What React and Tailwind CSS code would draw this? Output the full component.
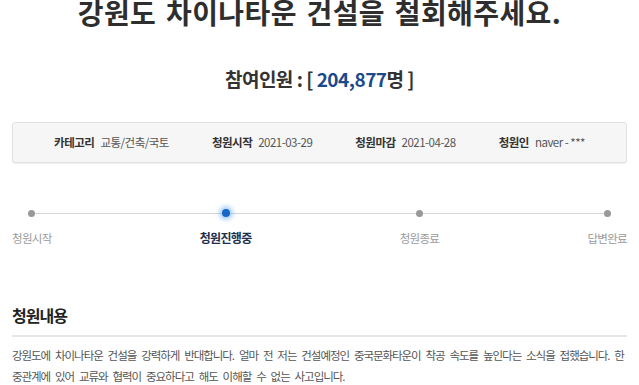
const steps = [
  { label: '청원시작', active: false },
  { label: '청원진행중', active: true },
  { label: '청원종료', active: false },
  { label: '답변완료', active: false },
];

const info = [
  { k: '카테고리', v: '교통/건축/국토' },
  { k: '청원시작', v: '2021-03-29' },
  { k: '청원마감', v: '2021-04-28' },
  { k: '청원인', v: 'naver - ***' },
];

function App() {
  return (
    <div className="w-[639px] h-[385px] overflow-hidden bg-white px-3 font-['Noto_Sans_CJK_KR',sans-serif] text-[#333]">
      {/* 제목 */}
      <h1 className="mt-[-6px] text-center text-[28px] leading-[36px] font-bold tracking-[0.4px] [word-spacing:3px] text-[#2e2e2e]">
        강원도 차이나타운 건설을 철회해주세요.
      </h1>

      <div className="mt-[36px] text-center text-[19px] leading-[26px] font-bold tracking-[-0.5px] text-[#333]">
        참여인원 : [ <span className="text-[#1b4a8c]">204,877</span>명 ]
      </div>

      {/* 정보 박스 */}
      <div className="mt-[30px] h-[41px] flex items-center justify-center gap-[43px] rounded-[3px] border border-[#e2e2e2] bg-[#f6f6f6] shadow-[0_1px_1px_rgba(0,0,0,0.06)] text-[11.5px] tracking-[-0.5px]">
        {info.map((it) => (
          <div key={it.k} className="flex items-center gap-[6px]">
            <span className="font-bold text-[#333]">{it.k}</span>
            <span className="text-[#555]">{it.v}</span>
          </div>
        ))}
      </div>

      {/* 진행 단계 */}
      <div className="relative mt-[43px] flex justify-between">
        <div className="absolute left-[21px] right-[21px] top-[7px] h-px bg-[#d6d6d6]" />
        {steps.map((s) => (
          <div key={s.label} className="relative flex flex-col items-center">
            <div className="h-[14px] flex items-center justify-center">
              {s.active ? (
                <span className="block w-[8px] h-[8px] rounded-full bg-[#1565c8] shadow-[0_0_4px_3px_rgba(70,150,240,0.45)]" />
              ) : (
                <span className="block w-[7px] h-[7px] rounded-full bg-[#999]" />
              )}
            </div>
            <span
              className={
                s.active
                  ? 'mt-[10px] text-[12px] leading-[16px] font-bold tracking-[-0.7px] text-[#1e2f4d]'
                  : 'mt-[10px] text-[11.5px] leading-[16px] tracking-[-0.7px] text-[#9a9a9a]'
              }
            >
              {s.label}
            </span>
          </div>
        ))}
      </div>

      {/* 청원내용 */}
      <h2 className="mt-[59px] text-[16px] leading-[20px] font-bold tracking-[-1px] text-[#222]">청원내용</h2>
      <div className="mt-[10px] h-[2px] bg-[#e6e6e6]" />
      <p className="mt-[8px] text-[11.5px] leading-[21px] tracking-[-1.05px] [word-spacing:3.4px] text-[#555] whitespace-nowrap">
        강원도에 차이나타운 건설을 강력하게 반대합니다. 얼마 전 저는 건설예정인 중국문화타운이 착공 속도를 높인다는 소식을 접했습니다. 한
        <br />
        중관계에 있어 교류와 협력이 중요하다고 해도 이해할 수 없는 사고입니다.
      </p>
    </div>
  );
}

export default App;
